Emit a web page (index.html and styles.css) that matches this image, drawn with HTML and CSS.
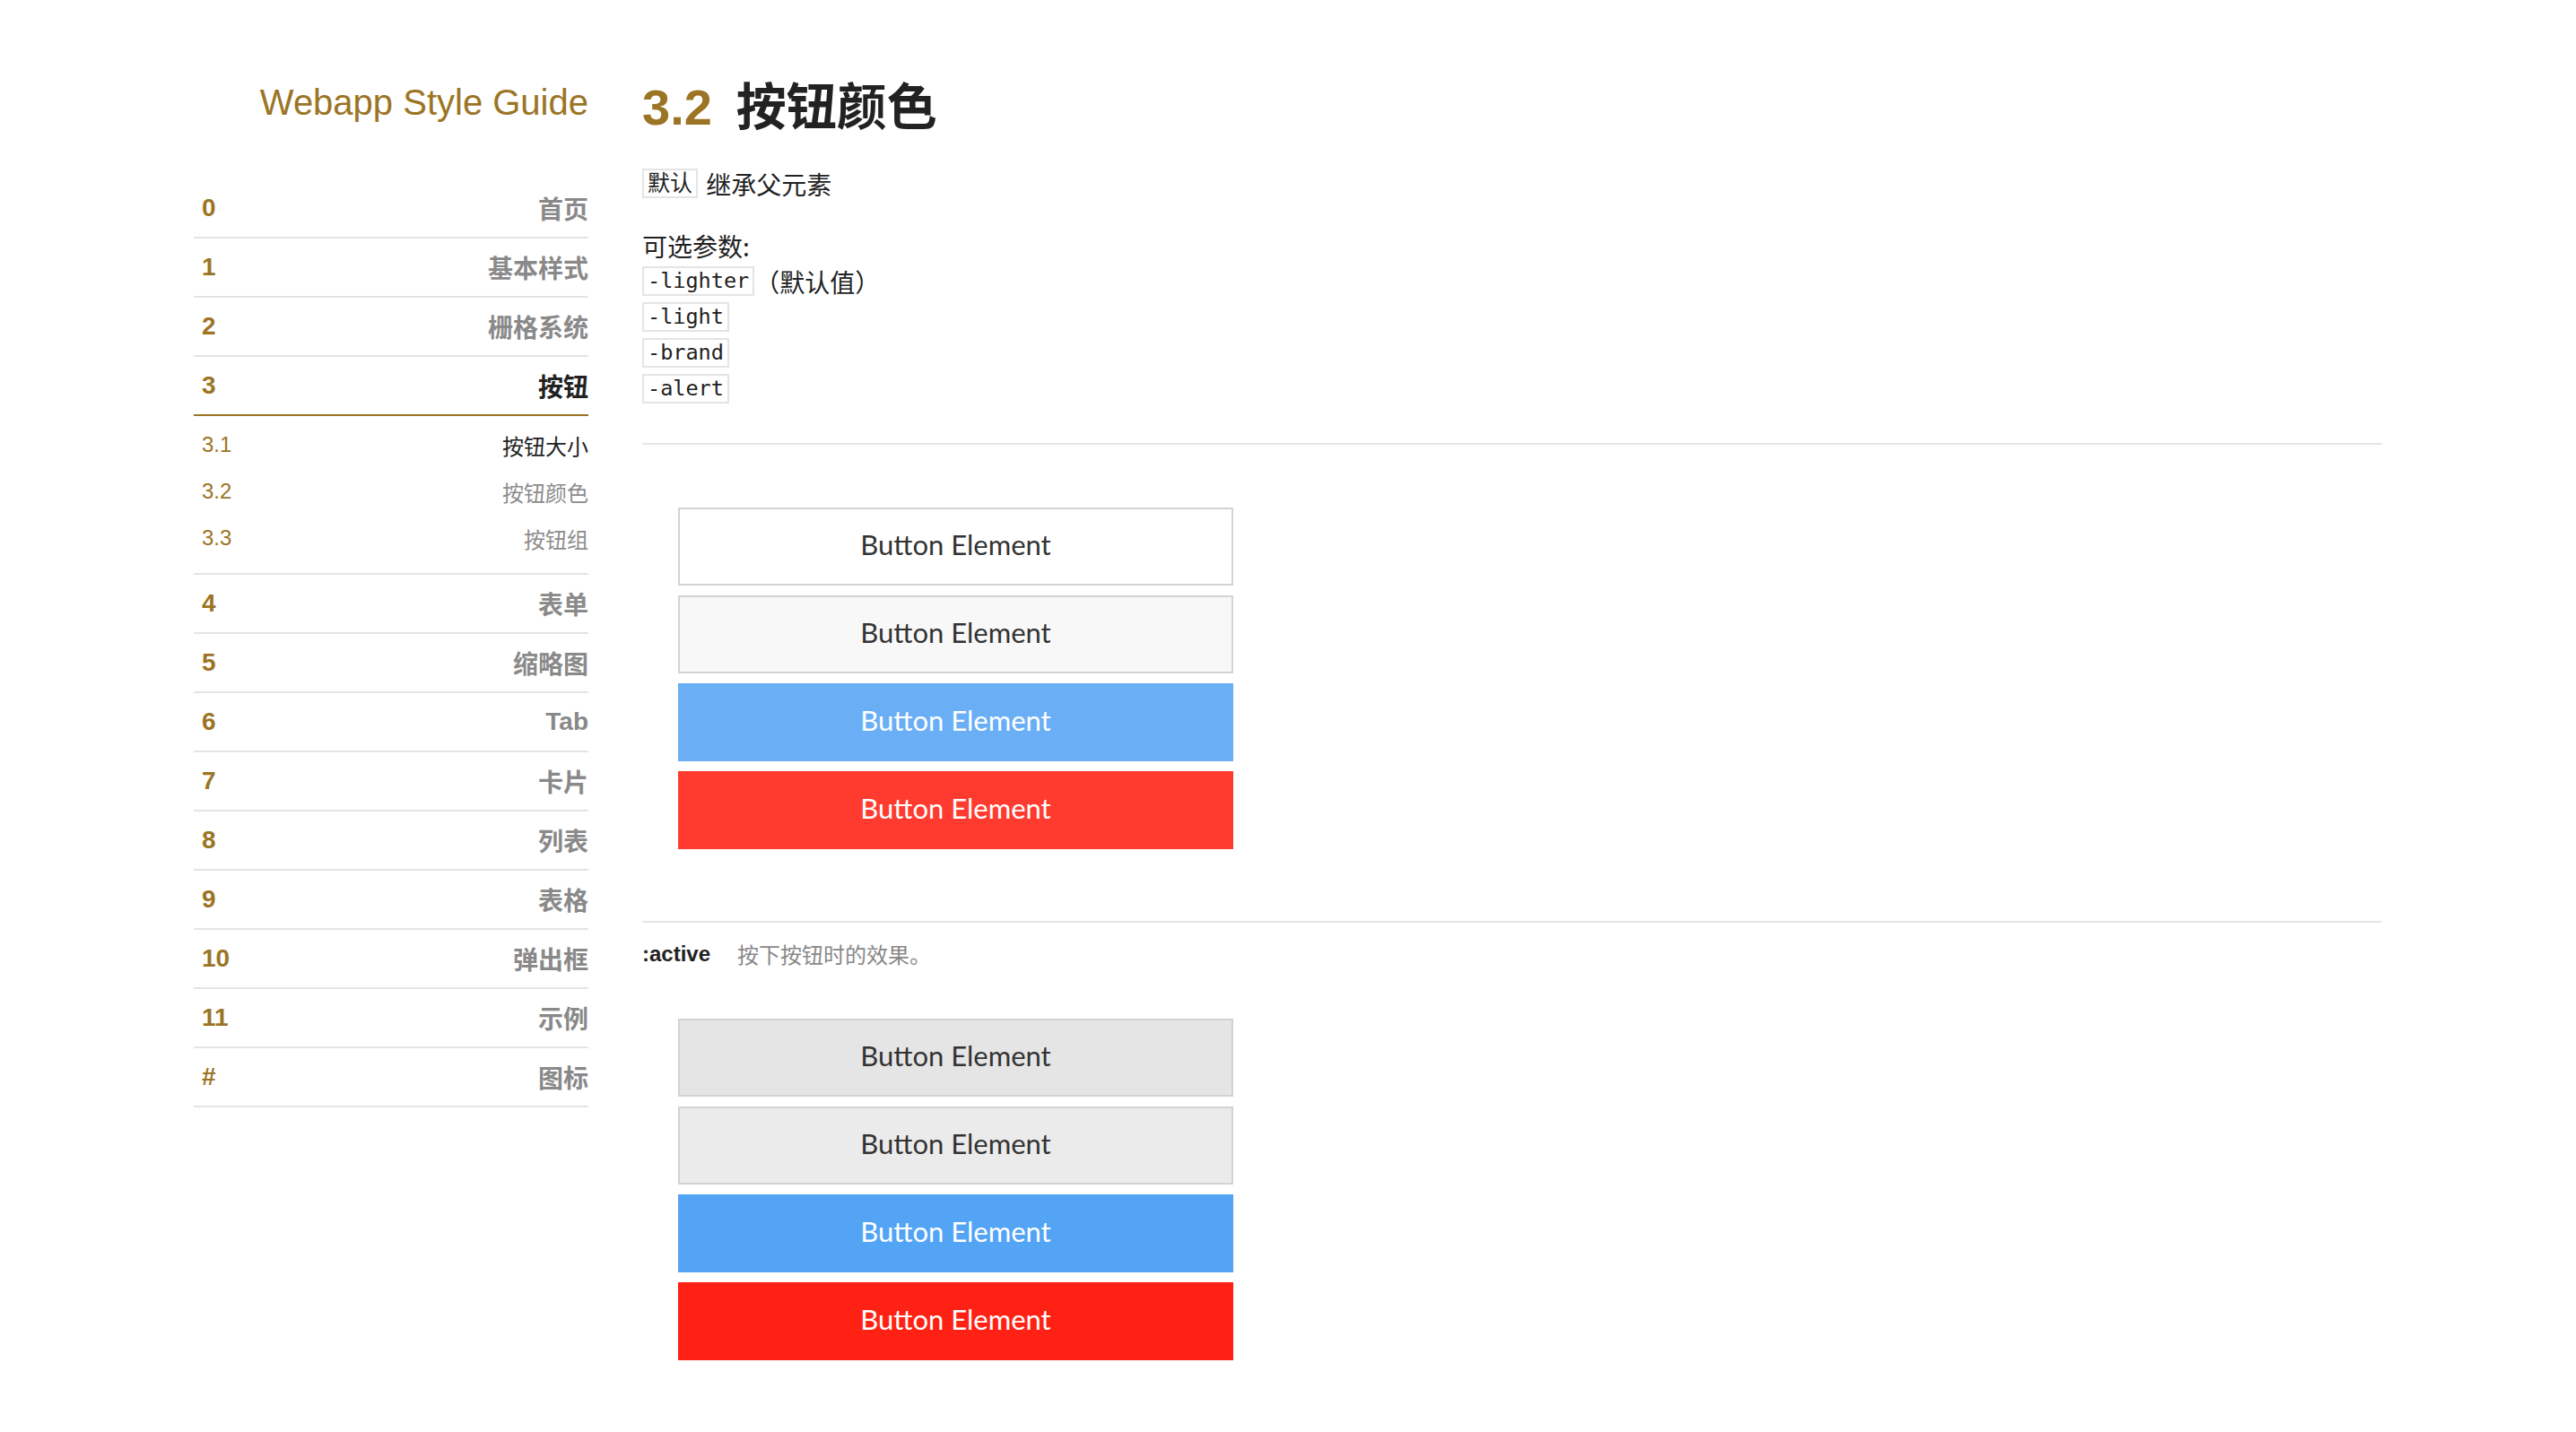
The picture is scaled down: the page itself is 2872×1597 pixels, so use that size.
FILE: index.html
```html
<!DOCTYPE html>
<html lang="zh-CN">
<head>
<meta charset="utf-8">
<title>Webapp Style Guide</title>
<link rel="stylesheet" href="styles.css">
</head>
<body>
<div class="page">
  <aside class="sidebar">
    <div class="brand">Webapp Style Guide</div>
    <ul class="nav">
      <li class="nav-item"><span class="num">0</span><span class="label">首页</span></li>
      <li class="nav-item"><span class="num">1</span><span class="label">基本样式</span></li>
      <li class="nav-item"><span class="num">2</span><span class="label">栅格系统</span></li>
      <li class="nav-item active"><span class="num">3</span><span class="label">按钮</span></li>
      <li class="subnav">
        <div class="sub-item current"><span class="num">3.1</span><span class="label">按钮大小</span></div>
        <div class="sub-item"><span class="num">3.2</span><span class="label">按钮颜色</span></div>
        <div class="sub-item"><span class="num">3.3</span><span class="label">按钮组</span></div>
      </li>
      <li class="nav-item"><span class="num">4</span><span class="label">表单</span></li>
      <li class="nav-item"><span class="num">5</span><span class="label">缩略图</span></li>
      <li class="nav-item"><span class="num">6</span><span class="label">Tab</span></li>
      <li class="nav-item"><span class="num">7</span><span class="label">卡片</span></li>
      <li class="nav-item"><span class="num">8</span><span class="label">列表</span></li>
      <li class="nav-item"><span class="num">9</span><span class="label">表格</span></li>
      <li class="nav-item"><span class="num">10</span><span class="label">弹出框</span></li>
      <li class="nav-item"><span class="num">11</span><span class="label">示例</span></li>
      <li class="nav-item"><span class="num">#</span><span class="label">图标</span></li>
    </ul>
  </aside>
  <main class="main">
    <h1 class="title"><span class="title-num">3.2</span>按钮颜色</h1>
    <div class="line first"><code class="code code-cjk">默认</code> 继承父元素</div>
    <div class="params">
      <div class="line">可选参数:</div>
      <div class="line"><code class="code">-lighter</code>（默认值）</div>
      <div class="line"><code class="code">-light</code></div>
      <div class="line"><code class="code">-brand</code></div>
      <div class="line"><code class="code">-alert</code></div>
    </div>
    <hr class="divider">
    <div class="btn-group">
      <button class="btn btn-lighter">Button Element</button>
      <button class="btn btn-light">Button Element</button>
      <button class="btn btn-brand">Button Element</button>
      <button class="btn btn-alert">Button Element</button>
    </div>
    <hr class="divider divider-2">
    <div class="state"><span class="state-name">:active</span><span class="state-desc">按下按钮时的效果。</span></div>
    <div class="btn-group active-group">
      <button class="btn btn-lighter is-active">Button Element</button>
      <button class="btn btn-light is-active">Button Element</button>
      <button class="btn btn-brand is-active">Button Element</button>
      <button class="btn btn-alert is-active">Button Element</button>
    </div>
  </main>
</div>
</body>
</html>
```

FILE: styles.css
```css
html, body {
  margin: 0;
  padding: 0;
  background: #ffffff;
}

body {
  font-family: "Liberation Sans", "Noto Sans CJK SC", sans-serif;
  color: #222222;
}

.page {
  display: flex;
  align-items: flex-start;
  gap: 60px;
  padding: 0 216px;
}

/* ---------- sidebar ---------- */
.sidebar {
  width: 440px;
  flex: 0 0 440px;
  padding-top: 90px;
}

.brand {
  font-size: 40px;
  line-height: 48px;
  color: #9b7424;
  text-align: right;
}

.nav {
  list-style: none;
  margin: 62px 0 0 0;
  padding: 0;
}

.nav-item {
  display: flex;
  justify-content: space-between;
  align-items: center;
  height: 64px;
  padding-left: 9px;
  border-bottom: 2px solid #e4e4e4;
  font-size: 28px;
  font-weight: bold;
}

.nav-item .num {
  color: #9b7424;
}

.nav-item .label {
  color: #898989;
}

.nav-item.active {
  border-bottom-color: #9b7424;
}

.nav-item.active .label {
  color: #222222;
}

.subnav {
  padding: 6px 0 13px 0;
  border-bottom: 2px solid #e4e4e4;
}

.sub-item {
  display: flex;
  justify-content: space-between;
  align-items: center;
  height: 52px;
  padding-left: 9px;
  font-size: 24px;
}

.sub-item .num {
  color: #9b7424;
}

.sub-item .label {
  color: #8c8c8c;
}

.sub-item.current .label {
  color: #222222;
}

/* ---------- main ---------- */
.main {
  flex: 1 1 auto;
  padding-top: 86px;
}

.title {
  margin: 0;
  font-size: 56px;
  line-height: 68px;
  font-weight: bold;
  color: #222222;
}

.title-num {
  color: #9b7424;
  margin-right: 27px;
}

.line {
  font-family: "Noto Sans CJK SC", "Liberation Sans", sans-serif;
  font-size: 28px;
  line-height: 40px;
  height: 40px;
  color: #222222;
}

.line.first {
  margin-top: 31px;
}

.params {
  margin-top: 29px;
}

.code {
  display: inline-block;
  vertical-align: top;
  margin-top: 3px;
  height: 33px;
  box-sizing: border-box;
  padding: 0 4px;
  border: 2px solid #e4e4e4;
  background: #ffffff;
  font-family: "DejaVu Sans Mono", "Noto Sans CJK SC", monospace;
  font-size: 23.5px;
  line-height: 29px;
  color: #222222;
}

.code-cjk {
  font-size: 25px;
  margin-right: 3px;
}

.divider {
  margin: 40px 0 0 0;
  height: 2px;
  border: 0;
  background: #e5e5e5;
}

.divider-2 {
  margin-top: 80px;
}

.btn-group {
  margin-top: 70px;
  padding-left: 40px;
}

.active-group {
  margin-top: 52px;
}

.btn {
  display: block;
  width: 619px;
  height: 87px;
  box-sizing: border-box;
  margin: 0 0 11px 0;
  padding: 0 0 6px 0;
  border: 2px solid #d4d4d4;
  background: #ffffff;
  font-family: "Lato", "Liberation Sans", sans-serif;
  font-size: 31px;
  color: #333333;
  text-align: center;
}

.btn:last-child {
  margin-bottom: 0;
}

.btn-light {
  background: #f8f8f8;
}

.btn-brand {
  background: #6aaff6;
  border-color: #6aaff6;
  color: #ffffff;
}

.btn-alert {
  background: #ff3b2f;
  border-color: #ff3b2f;
  color: #ffffff;
}

.btn-lighter.is-active {
  background: #e5e5e5;
  border-color: #d2d2d2;
}

.btn-light.is-active {
  background: #ebebeb;
  border-color: #d2d2d2;
}

.btn-brand.is-active {
  background: #53a4f5;
  border-color: #53a4f5;
}

.btn-alert.is-active {
  background: #ff2214;
  border-color: #ff2214;
}

.state {
  margin-top: 15px;
  height: 40px;
  line-height: 40px;
  display: flex;
  align-items: center;
}

.state-name {
  font-size: 24px;
  font-weight: bold;
  color: #222222;
}

.state-desc {
  margin-left: 30px;
  font-family: "Noto Sans CJK SC", sans-serif;
  font-size: 24px;
  color: #888888;
}
```
